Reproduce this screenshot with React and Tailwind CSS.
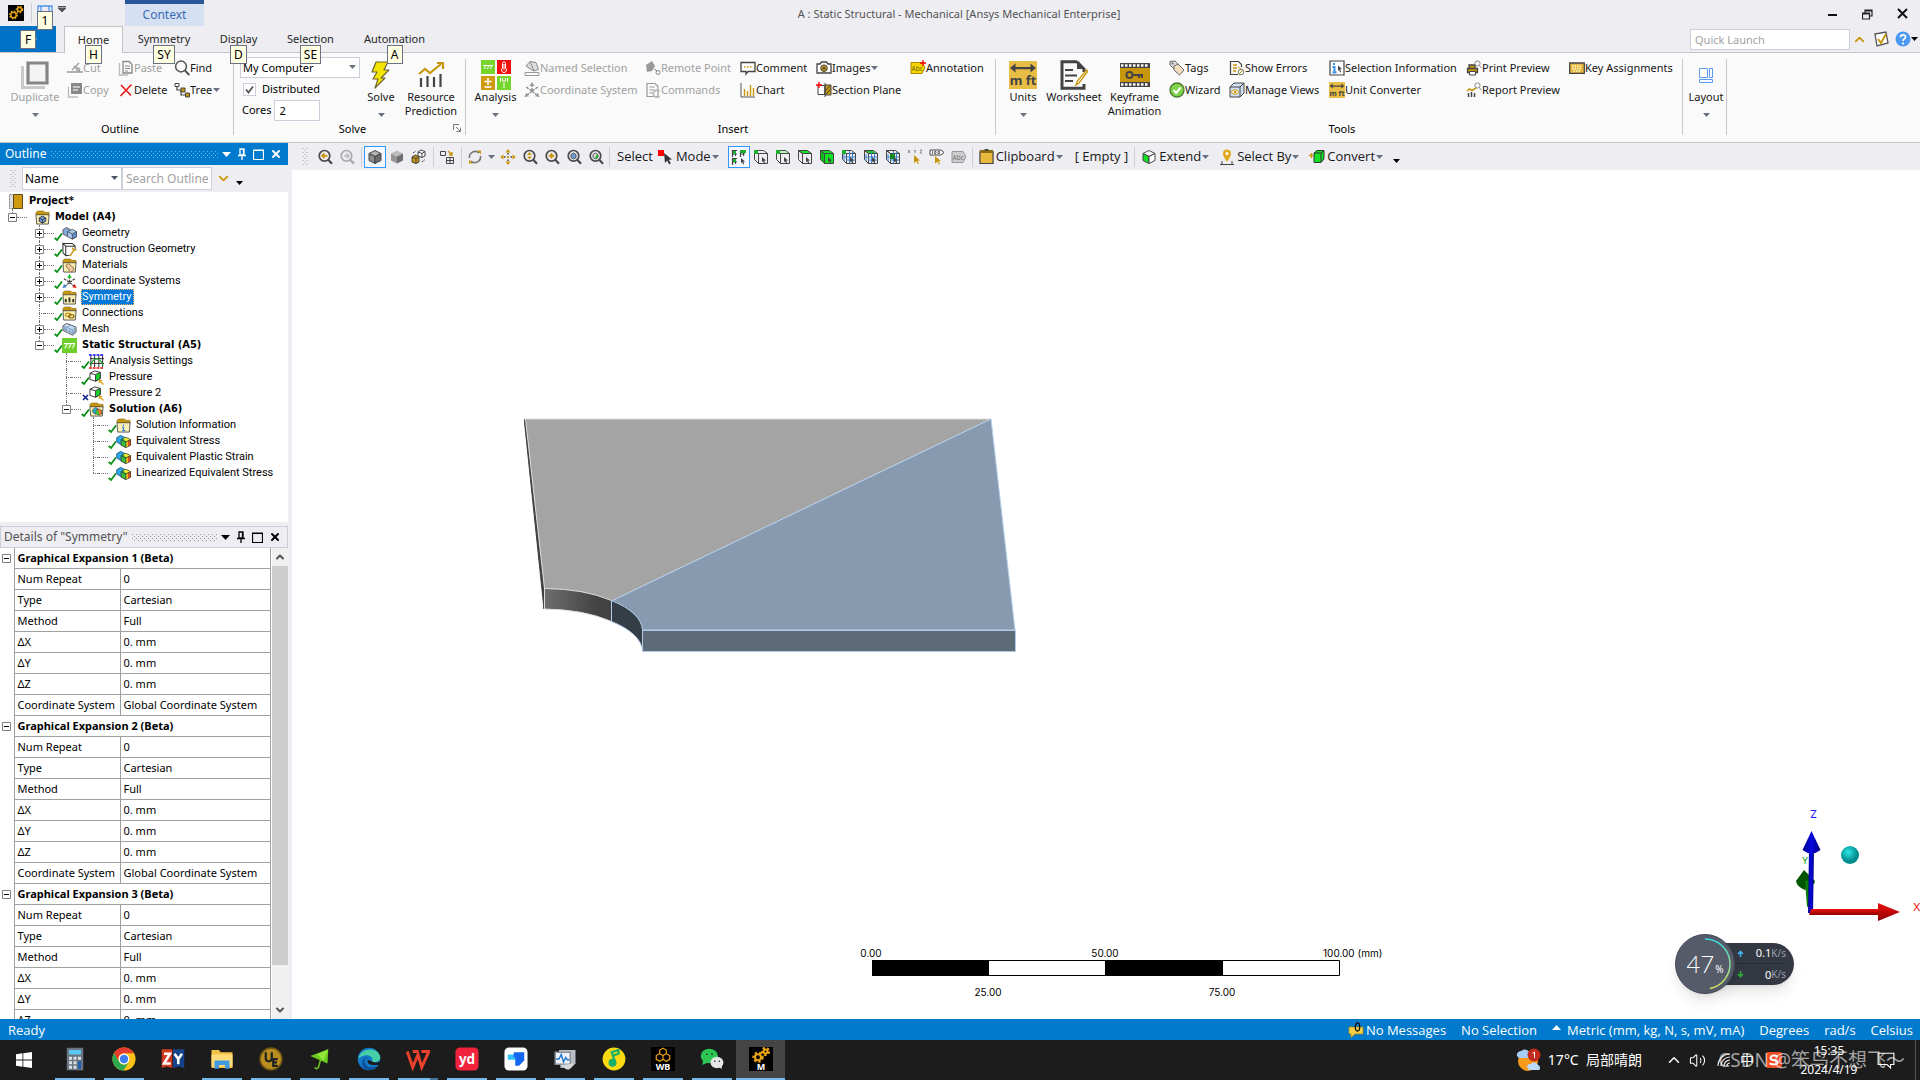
import { ChevronUp, ChevronDown, X, Volume2 } from 'lucide-react';

const GOLD = '#c8960c';
const DARK = '#444444';

const Svg = ({ w = 16, h = w, box = '0 0 16 16', children, className = '' }) => (
  <svg width={w} height={h} viewBox={box} fill="none" className={`shrink-0 ${className}`} aria-hidden="true">
    {children}
  </svg>
);

const Caret = ({ className = 'text-gray-500' }) => (
  <Svg w={7} h={4} box="0 0 7 4" className={className}>
    <path d="M0 0h7L3.5 4z" fill="currentColor" />
  </Svg>
);

const KeyTip = ({ children, className = '' }) => (
  <span className={`absolute z-10 h-[19px] min-w-4 border border-gray-500 bg-[#ffffe1] px-[3px] text-center text-xs leading-[17px] text-black ${className}`}>
    {children}
  </span>
);

/* ---------- icons ---------- */

const Gear = ({ cx, cy, r, color = '#e8a317' }) => (
  <>
    <circle cx={cx} cy={cy} r={r + 1} stroke={color} strokeWidth="1.6" strokeDasharray="1.5 1.4" />
    <circle cx={cx} cy={cy} r={r} stroke={color} strokeWidth="1.4" />
  </>
);

const AppIcon = ({ w = 16 }) => (
  <Svg w={w}>
    <path d="M0 0h16v16H0z" fill="#000" />
    <Gear cx={5.5} cy={10} r={2.7} />
    <Gear cx={11.5} cy={4.5} r={2} />
  </Svg>
);

const Cube = ({ top = '#fff', left = '#fff', right = '#fff', stroke = DARK, w = 16 }) => (
  <Svg w={w}>
    <path d="M8 1.5 14 4.5 8 7.5 2 4.5z" fill={top} stroke={stroke} strokeLinejoin="round" />
    <path d="M2 4.5 8 7.5v7L2 11.5z" fill={left} stroke={stroke} strokeLinejoin="round" />
    <path d="M14 4.5 8 7.5v7l6-3z" fill={right} stroke={stroke} strokeLinejoin="round" />
  </Svg>
);

const Magnifier = ({ stroke = '#4a4a4a', children }) => (
  <Svg>
    <circle cx="7.5" cy="6.8" r="5.3" stroke={stroke} strokeWidth="1.7" />
    <path d="m11 10.5 4 4.3" stroke={stroke} strokeWidth="2.2" />
    {children}
  </Svg>
);

const Arrow = ({ x = 9, y = 8 }) => (
  <path d={`M${x} ${y}l4 3.6-1.8.2 1 2.2-1 .4-1-2.1L${x} ${y + 5}z`} fill={DARK} />
);

const BoxPick = ({ top = 'none', front = 'none', side = 'none', grid, dot }) => (
  <Svg>
    <path d="M1.5 1.5h9l4 3h-9z" fill={top} stroke={DARK} />
    <path d="M1.5 1.5v9l4 4v-10z" fill={side} stroke={DARK} />
    <path d="M5.5 4.5h9v10h-9z" fill={front} stroke={DARK} />
    {grid && <path d="M8.5 2v12M11.5 3v11M3 8h11M3 5v7M5 11h9" stroke="#3b82d6" />}
    {dot && <path d="M1 1h4v4H1z" fill="#1fae2b" />}
    {grid === 'face' && <path d="M3 2h7l3 2H6z" fill="#16c626" />}
    {grid === 'body' && <path d="M5 5h5v5H5z" fill="#118a1c" />}
    <Arrow x={9} y={8} />
  </Svg>
);

const Doc = ({ color = DARK, children }) => (
  <Svg>
    <path d="M2 1.5h8l3 3v10H2z" stroke={color} strokeWidth="1.2" />
    <path d="M4.5 5h5M4.5 8h5M4.5 11h4" stroke={color} />
    {children}
  </Svg>
);

const Folder = ({ children }) => (
  <Svg>
    <path d="M1 5V2.5L3 1h6l1.5 1.5H15V6" fill={GOLD} stroke="#8a6a12" strokeWidth=".6" />
    <path d="M1 5h14l-.8 10H1.8z" fill="#fbefb4" stroke={DARK} strokeWidth=".9" />
    {children}
  </Svg>
);

const CubePair = ({ a, b, c }) => (
  <Svg>
    <path d="M1 4l4-2.5L9 4v5L5 11 1 8.500z" fill={a} stroke={DARK} strokeWidth=".8" />
    <path d="M6 6l5-2.500L15.500 6v5.500L11 14 6 11.500z" fill={b} stroke={DARK} strokeWidth=".8" />
    <path d="m11 8.500 4.500-2.500v5.500L11 14z" fill={c} stroke={DARK} strokeWidth=".8" />
    <path d="M6 6l5 2.500" stroke={DARK} strokeWidth=".8" />
  </Svg>
);

const StressCubes = () => (
  <Svg>
    <path d="M.8 4l4-2.500L9 3.500V9L5 11 .8 8.500z" fill="#2ba8e8" stroke="#1b4f7a" strokeWidth=".9" />
    <path d="M5 5.500 9 3.500V9l-4 2z" fill="#1fc8b0" />
    <path d="M5.500 6l5-2.500 5 2.500v6l-5 2.500-5-2.500z" fill="#35c53a" stroke="#333" strokeWidth=".9" />
    <path d="m8 5 2.500-1.200L15 6l-4.500 2z" fill="#f3e52a" />
    <path d="m10.500 8.500 2.500-1.300V13l-2.500 1.300z" fill="#f3c31c" />
    <path d="m13 7.300 2.200-1.100V12L13 13z" fill="#e0401c" />
    <path d="m5.500 6 5 2.500 5-2.500M10.500 8.500v6" stroke="#333" strokeWidth=".8" />
  </Svg>
);

const Axes = ({ gray }) => (
  <Svg>
    <path d="M8 9V2M8 9l6 5M8 9l-6 5M8 9 2 5M8 9l6-4" stroke={gray ? '#888' : '#444'} strokeWidth="1.3" strokeDasharray="3 1" />
    <path d="M8 0 5.500 4h5z" fill={gray ? '#999' : '#16c626'} />
    <path d="m15.500 15-4.500-.8 2.800-3.500z" fill={gray ? '#999' : '#e11'} />
    <path d="m.5 15 4.500-.8-2.800-3.500z" fill={gray ? '#999' : '#3b82d6'} />
  </Svg>
);

const MmFt = ({ w = 16 }) => (
  <Svg w={w} box="0 0 28 28">
    <path d="M0 0h28v28H0z" fill="#e8bd45" />
    <path d="M1 7 6.500 2.500v3.500h15V2.500L27 7l-5.500 4.500V8.200h-15v3.300z" fill={DARK} />
    <text x="14" y="24" textAnchor="middle" fontSize="13" fontWeight="700" fontFamily="Noto Sans, sans-serif" fill={DARK}>m ft</text>
  </Svg>
);

const Report = ({ w = 16, h = w }) => (
  <Svg w={w} h={h} box="0 0 28 26">
    <path d="M4 25V16M10.500 25V14M17 25V15M23.500 25V12" stroke={DARK} strokeWidth="2.200" />
    <path d="m2 12 6-5 5 4 11-9" stroke={GOLD} strokeWidth="2.200" />
    <path d="M20 1h6v6" stroke={GOLD} strokeWidth="2.200" />
  </Svg>
);

const icons = {
  duplicate: (
    <Svg w={28} box="0 0 28 28">
      <path d="M1.500 5v21.500H24" stroke="#c9c9c9" strokeWidth="3" />
      <path d="M7 2h19v20H7z" fill="#f4f4f4" stroke="#858585" strokeWidth="3.200" />
    </Svg>
  ),
  cut: (
    <Svg>
      <path d="M0 12h16M5 10 12 3M7 6l6 5" stroke="#999" strokeWidth="1.300" />
      <circle cx="11" cy="9.500" r="1.800" stroke="#999" />
    </Svg>
  ),
  copy: (
    <Svg>
      <path d="M1.500 5v10H11" stroke="#bbb" strokeWidth="1.300" />
      <path d="M4 1h11v11H4z" fill="#888" />
      <path d="M6 5h7M6 8h5" stroke="#fff" strokeWidth="1.200" />
    </Svg>
  ),
  paste: (
    <Svg>
      <path d="M1.500 3v12H10" stroke="#bbb" strokeWidth="1.300" />
      <path d="M5 1.500h6l3 3V13H5z" stroke="#888" strokeWidth="1.300" />
      <path d="M7 6h5M7 8.500h5M7 11h3" stroke="#888" />
    </Svg>
  ),
  find: (
    <Svg>
      <circle cx="7" cy="6.500" r="5.400" stroke="#555" strokeWidth="1.500" />
      <path d="m11 10.500 4.300 4.500" stroke="#555" strokeWidth="2" />
    </Svg>
  ),
  del: <Svg><path d="m3 3 10 10.500M13.500 2.500 2.500 14" stroke="#ee1c1c" strokeWidth="1.700" /></Svg>,
  tree: (
    <Svg>
      <path d="M3 4v4h5M7 8v5h5" stroke="#444" strokeWidth="1.200" />
      <path d="M1 1.500h4v3H1z" fill="#fff" stroke="#444" />
      <path d="M7 6h4v4H7zM11.500 11h4v4h-4z" fill={GOLD} stroke="#444" />
    </Svg>
  ),
  solve: (
    <Svg w={20} h={28} box="0 0 20 28">
      <path d="M5 1h12l-4 8h5L10 17h4L4 27l3-9H2l4-7H1z" fill="#f5e400" stroke="#6b6436" strokeWidth="1.200" strokeLinejoin="round" />
    </Svg>
  ),
  resource: <Report w={28} h={26} />,
  analysis: (
    <Svg w={30} h={30} box="0 0 30 30">
      <path d="M0 0h14v14H0zM16 16h14v14H16z" fill="#77d42a" />
      <path d="M16 0h14v14H16z" fill="#f40d0d" />
      <path d="M0 16h14v14H0z" fill="#cf9a0e" />
      <path d="M2 5.500h10M3 9l2-3M6 9l2-3M9 9l2-3" stroke="#fff" />
      <path d="M21.500 3.500a1.500 1.500 0 0 1 3 0V8a2.500 2.500 0 1 1-3 0zM23 4v6" stroke="#fff" />
      <path d="M7 18v7M3.500 21.500h7M3.500 27h7" stroke="#fff" strokeWidth="1.500" />
      <path d="M19.500 18v4M21.500 18v3M24.500 18v3M26.500 18v4M23 20v8" stroke="#fff" />
    </Svg>
  ),
  named: (
    <Svg>
      <path d="M1 12.500h14v3H1z" stroke="#999" />
      <path d="m2 6 4-4.500 6 1 2.500 7-5 1.500z" fill="#ddd" stroke="#888" />
      <path d="m6 1.500 4 9.500" stroke="#888" />
    </Svg>
  ),
  coord: <Axes gray />,
  remote: (
    <Svg>
      <path d="m1 5 6-4 3 5-3 5-5 1z" fill="#999" />
      <path d="m9 9 3 2" stroke="#888" />
      <circle cx="13" cy="12.500" r="2" stroke="#888" />
    </Svg>
  ),
  commands: (
    <Doc color="#999">
      <path d="M14.500 9.500A3.500 3.500 0 1 0 14.500 14" stroke="#bbb" strokeWidth="1.800" />
    </Doc>
  ),
  comment: (
    <Svg>
      <path d="M1 2.500h14v9H8L6 14v-2.500H1z" fill="#fff" stroke={DARK} strokeWidth="1.300" />
      <path d="M4 7h8" stroke={GOLD} strokeWidth="1.300" strokeDasharray="1.500 1.500" />
    </Svg>
  ),
  chart: (
    <Svg>
      <path d="M1 1v14h14" stroke="#555" />
      <path d="M4.500 14V7M7.500 14V9M10.500 14V3M13.500 14V6" stroke={GOLD} strokeWidth="1.400" />
    </Svg>
  ),
  images: (
    <Svg>
      <path d="M1 4h3l1.500-2h5L12 4h3v9H1z" fill="#fff" stroke={DARK} strokeWidth="1.300" />
      <circle cx="8" cy="8.200" r="3.300" fill={GOLD} stroke={DARK} />
      <circle cx="8" cy="8.200" r="1.200" fill={DARK} />
    </Svg>
  ),
  section: (
    <Svg>
      <path d="M2 3.500h7v9H2z" fill="#fff" stroke={DARK} />
      <path d="M9 3h6v10H9z" fill={GOLD} stroke={DARK} />
      <path d="m9 9 5-5M10 12l5-5M9 1v14" stroke={DARK} />
      <path d="M3 0v6M0 3h6" stroke="#f00" strokeWidth="1.300" />
    </Svg>
  ),
  annotation: (
    <Svg>
      <path d="M1 2.500h11l3 5-3 6H1z" fill="#f2d500" stroke="#a88a00" />
      <text x="1.500" y="10.500" fontSize="6.500" fontFamily="Noto Sans, sans-serif" fill="#7a6600">Abc</text>
      <path d="M13 0v6M10 3h6" stroke="#f00" strokeWidth="1.300" />
    </Svg>
  ),
  units: <MmFt w={28} />,
  unitConverter: <MmFt />,
  worksheet: (
    <Svg w={28} h={30} box="0 0 28 30">
      <path d="M17 1.700H2v26.600h22V24M17 1.700 24 9v3" stroke={DARK} strokeWidth="3" />
      <path d="M17 1v8h7.500z" fill={DARK} />
      <path d="M5 10h8M5 15.500h12M5 21h8" stroke={DARK} strokeWidth="2" />
      <path d="m16 25 1.500-4L26.500 10l1.200 1.200L19 23z" fill="#fff" stroke={GOLD} strokeWidth="1.300" />
    </Svg>
  ),
  keyframe: (
    <Svg w={30} h={24} box="0 0 30 24">
      <path d="M0 0h30v24H0z" fill={DARK} />
      <path d="M1 2.500h28M1 21.500h28" stroke="#fff" strokeWidth="2.500" strokeDasharray="2.500 1.500" />
      <path d="M0 5h30v14H0z" fill={GOLD} />
      <circle cx="9.500" cy="12" r="3" stroke={DARK} strokeWidth="2" />
      <path d="M12.500 12H23M19 12v3M22 12v3" stroke={DARK} strokeWidth="2" />
    </Svg>
  ),
  tags: (
    <Svg>
      <path d="m1 1.500 5-.5 4 4-4 5-5-5z" fill="#ddd" stroke="#666" />
      <path d="m5 6 4-2 6 6-4.500 5L5 10z" fill="#f6dfc0" stroke="#666" />
      <circle cx="3.500" cy="3.500" r="1" fill="#666" />
    </Svg>
  ),
  wizard: (
    <Svg>
      <circle cx="8" cy="8" r="7" fill="#7ed348" stroke="#4c7a35" strokeWidth="1.300" />
      <path d="m4.500 8 2.700 3 4.500-5.500" stroke="#fff" strokeWidth="2" />
    </Svg>
  ),
  errors: (
    <Svg>
      <path d="M9 14.500H1.500v-13h8l3 3V7" stroke={DARK} strokeWidth="1.200" />
      <path d="M4 5h4M4 8h4M4 11h3" stroke={GOLD} strokeWidth="1.300" />
      <circle cx="12" cy="12" r="2.800" stroke="#777" />
      <path d="m10 14 4-4M9 7l3 2" stroke={GOLD} />
    </Svg>
  ),
  views: (
    <Svg>
      <path d="M1 5h10v10H1zM1 5l4-4h10v10l-4 4M11 5l4-4" fill="#cfe0f5" stroke={DARK} />
      <ellipse cx="6" cy="10" rx="3.500" ry="2.200" fill="#fff" stroke={GOLD} />
      <circle cx="6" cy="10" r="1.300" fill={GOLD} />
    </Svg>
  ),
  selInfo: (
    <Svg>
      <path d="M1 1h14v14H1z" fill="#fff" stroke={DARK} strokeWidth="1.200" />
      <path d="M5 3v2M3.500 7H5.500v5M3.500 12.500h4" stroke="#3b8fe8" strokeWidth="2" />
      <path d="M9 5.500 13 9l-2 .3 1.200 2.700-1 .5L10 9.800 9 11z" fill={DARK} />
    </Svg>
  ),
  print: (
    <Svg>
      <path d="M3 9V5h6v4M1.500 8.500h10v4h-10z" fill={GOLD} stroke={DARK} strokeWidth="1.300" />
      <path d="M3.500 11.500h6v3.500h-6z" fill="#fff" stroke={DARK} />
      <circle cx="11.500" cy="3.500" r="2.600" stroke="#888" />
      <path d="m13.300 5.500 2.200 2.500" stroke="#888" />
    </Svg>
  ),
  reportPreview: (
    <Svg>
      <path d="M2.500 15v-4M5.500 15v-5M8.500 15v-4" stroke={DARK} strokeWidth="1.500" />
      <path d="m1 9 2.500-2L6 8.500 10 6" stroke={GOLD} strokeWidth="1.500" />
      <circle cx="11.500" cy="3.500" r="2.600" stroke="#888" />
      <path d="m13.300 5.500 2.200 2.500" stroke="#888" />
    </Svg>
  ),
  keys: (
    <Svg>
      <path d="M.7 3h14.600v10.300H.7z" fill="#e8b93c" stroke={DARK} strokeWidth="1.300" />
      <path d="M3 6h10M3 8.500h10M4.500 11h7" stroke="#fff7d8" strokeWidth="1.300" strokeDasharray="1.500 1" />
    </Svg>
  ),
  layout: (
    <Svg>
      <path d="M1.500 1.500h8v9h-8zM11.500 1.500h3v9h-3zM1.500 12.500h13v3h-13z" fill="#fff" stroke="#5b9bf0" />
    </Svg>
  ),
};

/* ---------- ribbon ---------- */

const SmallButton = ({ icon, label, disabled, menu }) => (
  <button disabled={disabled} className="flex h-[22px] items-center whitespace-nowrap text-[11px] text-neutral-900 disabled:text-neutral-400">
    {icons[icon]}
    <span>{label}</span>
    {menu && <Caret className="ml-px text-gray-500" />}
  </button>
);

const BigButton = ({ icon, lines, disabled, menu, className = '' }) => (
  <button disabled={disabled} className={`flex shrink-0 flex-col items-center pt-[7px] text-[11px] leading-[14px] text-neutral-900 disabled:text-neutral-400 ${className}`}>
    <span className="flex h-[30px] items-center">{icons[icon]}</span>
    {lines.map((l) => <span key={l} className="whitespace-nowrap">{l}</span>)}
    {menu && <span className="flex h-[22px] items-center"><Caret /></span>}
  </button>
);

const Group = ({ label, children, className = '' }) => (
  <>
    <section aria-label={label || 'Layout'} className={`flex shrink-0 flex-col ${className}`}>
      <div className="flex h-[68px] items-start">{children}</div>
      <div className="text-center text-[11px] leading-4">{label}</div>
    </section>
    <div className="mt-1.5 h-[76px] w-px shrink-0 bg-[#c8c8ce]" />
  </>
);

const Column = ({ children, className = '' }) => <div className={`shrink-0 pt-1 ${className}`}>{children}</div>;

const Ribbon = () => (
  <div className="flex h-[90px] shrink-0 overflow-hidden border-b border-[#c3c3c9] bg-[#fafafa]">
    <Group label="Outline" className="w-[233px] pl-[7px]">
      <BigButton icon="duplicate" lines={['Duplicate']} disabled menu className="w-[56px]" />
      <Column className="ml-1 w-[51px]">
        <SmallButton icon="cut" label="Cut" disabled />
        <SmallButton icon="copy" label="Copy" disabled />
      </Column>
      <Column className="w-[56px]">
        <SmallButton icon="paste" label="Paste" disabled />
        <SmallButton icon="del" label="Delete" />
      </Column>
      <Column>
        <SmallButton icon="find" label="Find" />
        <SmallButton icon="tree" label="Tree" menu />
      </Column>
    </Group>
    <Group label="Solve" className="relative w-[231px] pl-[6px]">
      <div className="w-[120px] pt-1 text-[11px]">
        <div className="relative">
          <select aria-label="Solve target" className="block h-[21px] w-full appearance-none border border-[#cccedb] bg-white pl-0.5 leading-4">
            <option>My Computer</option>
          </select>
          <Caret className="pointer-events-none absolute top-2 right-1 text-gray-500" />
        </div>
        <label className="flex h-[22px] items-center gap-1.5 pl-[3px]">
          <span className="relative flex">
            <input type="checkbox" defaultChecked className="size-[13px] appearance-none border border-[#cccedb] bg-white" />
            <Svg w={9} box="0 0 9 9" className="pointer-events-none absolute top-0.5 left-0.5">
              <path d="m1 4.500 2.500 3L8 1.500" stroke="#555" strokeWidth="1.800" />
            </Svg>
          </span>
          Distributed
        </label>
        <label className="flex h-[21px] items-center gap-[3px] pl-0.5">
          Cores
          <input defaultValue="2" className="h-[21px] w-[46px] border border-[#cccedb] bg-white px-1" />
        </label>
      </div>
      <BigButton icon="solve" lines={['Solve']} menu className="ml-[3px] w-[36px]" />
      <BigButton icon="resource" lines={['Resource', 'Prediction']} className="ml-[3px] w-[58px]" />
      <Svg w={8} box="0 0 8 8" className="absolute right-1 bottom-2.5">
        <path d="M.5 6V.5H6M3 3l4 4M7.500 3.500v4h-4" stroke="#777" />
      </Svg>
    </Group>
    <Group label="Insert" className="w-[529px] pl-[5px]">
      <BigButton icon="analysis" lines={['Analysis']} menu className="w-[49px]" />
      <Column className="ml-1 w-[121px]">
        <SmallButton icon="named" label="Named Selection" disabled />
        <SmallButton icon="coord" label="Coordinate System" disabled />
      </Column>
      <Column className="w-[95px]">
        <SmallButton icon="remote" label="Remote Point" disabled />
        <SmallButton icon="commands" label="Commands" disabled />
      </Column>
      <Column className="w-[76px]">
        <SmallButton icon="comment" label="Comment" />
        <SmallButton icon="chart" label="Chart" />
      </Column>
      <Column className="w-[94px]">
        <SmallButton icon="images" label="Images" menu />
        <SmallButton icon="section" label="Section Plane" />
      </Column>
      <Column>
        <SmallButton icon="annotation" label="Annotation" />
      </Column>
    </Group>
    <Group label="Tools" className="w-[686px] pl-[6px]">
      <BigButton icon="units" lines={['Units']} menu className="w-[42px]" />
      <BigButton icon="worksheet" lines={['Worksheet']} className="ml-px w-[58px]" />
      <BigButton icon="keyframe" lines={['Keyframe', 'Animation']} className="ml-[3px] w-[57px]" />
      <Column className="ml-[6px] w-[60px]">
        <SmallButton icon="tags" label="Tags" />
        <SmallButton icon="wizard" label="Wizard" />
      </Column>
      <Column className="w-[100px]">
        <SmallButton icon="errors" label="Show Errors" />
        <SmallButton icon="views" label="Manage Views" />
      </Column>
      <Column className="w-[137px]">
        <SmallButton icon="selInfo" label="Selection Information" />
        <SmallButton icon="unitConverter" label="Unit Converter" />
      </Column>
      <Column className="w-[103px]">
        <SmallButton icon="print" label="Print Preview" />
        <SmallButton icon="reportPreview" label="Report Preview" />
      </Column>
      <Column>
        <SmallButton icon="keys" label="Key Assignments" />
      </Column>
    </Group>
    <Group className="w-[43px] pl-1">
      <BigButton icon="layout" lines={['Layout']} menu className="w-[38px]" />
    </Group>
  </div>
);

/* ---------- title bar and tabs ---------- */

const TitleBar = () => (
  <header className="relative flex h-[26px] shrink-0 items-start bg-[#eeeef2]">
    <div className="flex items-center pt-[3px] pl-2">
      <AppIcon />
      <span className="ml-[7px] h-[20px] w-px bg-[#cccedb]" />
      <button aria-label="Save" className="relative ml-[5px]">
        <Svg>
          <path d="M1 1h14v14H1zM4 1v6h8V1M4 15v-4h8v4" stroke="#4f93ea" strokeWidth="1.300" />
        </Svg>
        <KeyTip className="top-1.5 left-0">1</KeyTip>
      </button>
      <Svg w={8} h={6} box="0 0 8 6" className="-mt-2 ml-[5px]">
        <path d="M0 .5h8M0 2h8L4 6z" fill="#555" stroke="#555" />
      </Svg>
    </div>
    <div className="absolute left-[125px] h-[26px] w-[79px] border-t-4 border-[#2b579a] bg-[#d5e0f2] text-center text-xs leading-[22px] text-[#3a6db5]">Context</div>
    <h1 className="flex-1 self-center pr-[68px] pt-[2px] text-center text-[11px] text-neutral-600">
      A : Static Structural - Mechanical [Ansys Mechanical Enterprise]
    </h1>
    <div className="absolute right-0 flex items-center gap-[24px] pt-[7px] pr-[12px]">
      <button aria-label="Minimize"><Svg w={10} h={14} box="0 0 10 14"><path d="M0 8h9" stroke="#111" strokeWidth="2" /></Svg></button>
      <button aria-label="Restore"><Svg w={11} h={14} box="0 0 11 14"><path d="M3 6V3h7v6H7M.5 6h7v6h-7zM.5 7h7M3 4h7" stroke="#222" strokeWidth="1.200" /></Svg></button>
      <button aria-label="Close"><Svg w={11} h={14} box="0 0 11 14"><path d="m1 2 9 9M10 2l-9 9" stroke="#111" strokeWidth="2" /></Svg></button>
    </div>
  </header>
);

const tabs = [
  { name: 'Symmetry', tip: 'SY', width: 'w-[82px]' },
  { name: 'Display', tip: 'D', width: 'w-[67px]' },
  { name: 'Selection', tip: 'SE', width: 'w-[77px]' },
  { name: 'Automation', tip: 'A', width: 'w-[91px]' },
];

const Tabs = () => (
  <nav className="flex h-[27px] shrink-0 border-b border-[#c3c3c9] bg-[#eeeef2] text-[11px] text-neutral-800">
    <button className="relative w-[56px] bg-[#0072c6] text-white">
      File
      <KeyTip className="top-1 left-5">F</KeyTip>
    </button>
    <button className="relative -mb-px ml-2 w-[59px] border border-b-0 border-[#c3c3c9] bg-[#fafafa]">
      Home
      <KeyTip className="top-[18px] left-[20px]">H</KeyTip>
    </button>
    {tabs.map((t) => (
      <button key={t.name} className={`relative pt-px ${t.width}`}>
        {t.name}
        <span className="absolute top-[19px] left-0 flex w-full justify-center">
          <KeyTip>{t.tip}</KeyTip>
        </span>
      </button>
    ))}
    <div className="ml-auto flex items-center gap-1.5 pr-0.5">
      <input placeholder="Quick Launch" aria-label="Quick Launch" className="-mr-1 h-[21px] w-[160px] border border-[#cccedb] bg-white px-1 placeholder:text-neutral-400" />
      <ChevronUp size={15} strokeWidth={3} color={GOLD} />
      <Svg>
        <path d="m2 3 11-2 2 11-11 3z" fill="#fff" stroke="#555" strokeWidth="1.300" />
        <path d="m5 8 3 4 5-9" stroke={GOLD} strokeWidth="2" />
      </Svg>
      <button aria-label="Help" className="flex items-center">
        <Svg>
          <circle cx="8" cy="8" r="7.500" fill="#4a98ef" />
          <path d="M5.500 6.200C5.500 3 10.700 3 10.500 6.200 10.300 8 8 7.800 8 10M8 11.500v2" stroke="#fff" strokeWidth="1.800" />
        </Svg>
        <Caret className="text-black" />
      </button>
    </div>
  </nav>
);

/* ---------- outline ---------- */

const DockHeader = ({ title, active }) => (
  <div className={`flex h-[22px] shrink-0 items-center pr-1.5 text-xs ${active ? 'bg-[#007acc] pl-[5px] text-white' : 'border border-[#cccedb] bg-[#eeeef2] pl-[3px] text-neutral-600'}`}>
    <span className="whitespace-nowrap">{title}</span>
    <svg className="mx-1 h-[7px] min-w-0 flex-1" aria-hidden="true">
      <defs>
        <pattern id={active ? 'gripActive' : 'grip'} width="4" height="4" patternUnits="userSpaceOnUse">
          <path d="M0 0h1v1H0zM2 2h1v1H2z" fill={active ? '#66b3e6' : '#9a9aa2'} />
        </pattern>
      </defs>
      <rect width="100%" height="100%" fill={active ? 'url(#gripActive)' : 'url(#grip)'} />
    </svg>
    <div className={`flex items-center gap-1.5 ${active ? 'text-white' : 'text-black'}`}>
      <button aria-label="Panel menu"><Svg w={9} h={5} box="0 0 9 5"><path d="M0 0h9L4.500 5z" fill="currentColor" /></Svg></button>
      <button aria-label="Pin">
        <Svg w={10} h={12} box="0 0 10 12"><path d="M3 1h4v6H3zM6.500 1v6M1 7.500h8M5 8v4" stroke="currentColor" strokeWidth="1.300" /></Svg>
      </button>
      <button aria-label="Maximize">
        <Svg w={11} h={11} box="0 0 11 11"><path d="M.5 1h10v9.500H.5zM.5 1.500h10" stroke="currentColor" strokeWidth="1.200" /></Svg>
      </button>
      <button aria-label="Close panel"><X size={12} strokeWidth={4} /></button>
    </div>
  </div>
);

const Grip = () => (
  <Svg w={6} h={17} box="0 0 6 17">
    <path d="M1 0v17M5 0v17" stroke="#a0a0a8" strokeWidth="1" strokeDasharray="1 3" />
    <path d="M3 2v15" stroke="#a0a0a8" strokeWidth="1" strokeDasharray="1 3" />
  </Svg>
);

const treeIcons = {
  model: <Folder><path d="m4.500 8.500 3.500-2 3.500 2v3.500l-3.500 2-3.500-2z" fill="#6ea3e0" stroke="#333" /><path d="m4.500 8.500 3.500 2 3.500-2M8 10.500V14" stroke="#333" /></Folder>,
  geometry: <CubePair a="#7fa9dc" b="#a9c8ee" c="#5f90cc" />,
  construction: (
    <Svg>
      <path d="M1 1.500h10l3 3M1 1.500v10l3 3V4.500zM4 4.500h10v3M4 14.500h4" stroke="#333" fill="#fff" strokeWidth="1.100" />
      <path d="m8.500 15 4-6M11 6l1.500 3 3-1" stroke={GOLD} strokeWidth="1.600" />
    </Svg>
  ),
  materials: <Folder><path d="m4 8 3-2 6 5-2 3.500-2 .5z" fill="#efc9a0" stroke="#8c6a4a" /></Folder>,
  coords: <Axes />,
  symmetry: <Folder><path d="M4 13V9.500M8 13V8M12 13V9.500" stroke="#333" strokeWidth="2" /></Folder>,
  connections: <Folder><ellipse cx="6.500" cy="9.500" rx="2.800" ry="1.800" stroke={GOLD} strokeWidth="1.300" /><ellipse cx="10" cy="11" rx="2.800" ry="1.800" stroke="#8a6a12" strokeWidth="1.300" /></Folder>,
  mesh: (
    <Svg>
      <path d="M1 4l4-2.500L9 3l6 2.500V11l-4 3-5-2.500L1 9z" fill="#c5daf3" stroke="#555" />
      <path d="M1 4l4 2 4-3M5 6v5M6 6l5 2.500 4-3M11 8.500V14M3 5v5M1 6.500 5 8.500l6 3 4-3M8.500 7v5.500M13 7v5.500" stroke="#6a87ab" strokeWidth=".7" />
    </Svg>
  ),
  structural: (
    <Svg>
      <path d="M0 0h16v16H0z" fill="#6fcf2a" />
      <path d="M2 6h12M3 11l2.500-4M7 11l2.500-4M11 11l2.500-4" stroke="#fff" strokeWidth="1.200" />
    </Svg>
  ),
  settings: (
    <Svg>
      <path d="M2 1v13M6 1v13M10.500 1v13M14.500 1v13M1 5h15M1 10h15" stroke="#222" />
      <path d="M1.500 12C5 3 11 3 15 12" stroke="#19a52b" strokeWidth="1.200" />
      <path d="M0 1h15" stroke="#11f" strokeWidth="1.500" strokeDasharray="3 1" />
      <path d="M0 15h16" stroke="#e11" strokeWidth="1.500" strokeDasharray="3 1" />
    </Svg>
  ),
  pressure: (
    <Svg>
      <path d="m1 3.500 5-2.500 6 1.500v6.500l-5 3-6-2z" fill="#fff" stroke="#333" />
      <path d="m7 5 5-2.500V9l-5 3z" fill="#16d62c" stroke="#333" />
      <path d="M1 3.500 7 5" stroke="#333" />
      <path d="m15.500 15.500-4-4M11 14v-3h3" stroke="#d9a520" strokeWidth="1.400" />
    </Svg>
  ),
  solution: <Folder><path d="m4 8 3-2 3 1.500v4L7 13l-3-2z" fill="#28b8d0" stroke="#333" strokeWidth=".7" /><path d="m7.500 9 3-1.500 3 1.500v3.500l-3 1.500-3-1.500z" fill="#f0801c" stroke="#333" strokeWidth=".7" /><path d="m7.500 9 3 1.500V14l-3-1.500z" fill="#35c53a" /></Folder>,
  info: <Folder><path d="M8 7v1.500M6.500 10H8v3.500M6.500 13.500h3.500" stroke="#3b82d6" strokeWidth="1.300" /></Folder>,
  stress: <StressCubes />,
};

const tree = [
  { level: 0, label: 'Model (A4)', icon: 'model', box: '-', bold: true, last: true },
  { level: 1, label: 'Geometry', icon: 'geometry', box: '+', mark: 'ok' },
  { level: 1, label: 'Construction Geometry', icon: 'construction', box: '+', mark: 'ok' },
  { level: 1, label: 'Materials', icon: 'materials', box: '+', mark: 'ok' },
  { level: 1, label: 'Coordinate Systems', icon: 'coords', box: '+', mark: 'ok' },
  { level: 1, label: 'Symmetry', icon: 'symmetry', box: '+', mark: 'ok', selected: true },
  { level: 1, label: 'Connections', icon: 'connections', mark: 'ok' },
  { level: 1, label: 'Mesh', icon: 'mesh', box: '+', mark: 'ok' },
  { level: 1, label: 'Static Structural (A5)', icon: 'structural', box: '-', mark: 'ok', bold: true, last: true },
  { level: 2, label: 'Analysis Settings', icon: 'settings', mark: 'ok' },
  { level: 2, label: 'Pressure', icon: 'pressure', mark: 'ok' },
  { level: 2, label: 'Pressure 2', icon: 'pressure', mark: 'off' },
  { level: 2, label: 'Solution (A6)', icon: 'solution', box: '-', mark: 'ok', bold: true, last: true },
  { level: 3, label: 'Solution Information', icon: 'info', mark: 'ok' },
  { level: 3, label: 'Equivalent Stress', icon: 'stress', mark: 'ok' },
  { level: 3, label: 'Equivalent Plastic Strain', icon: 'stress', mark: 'ok' },
  { level: 3, label: 'Linearized Equivalent Stress', icon: 'stress', mark: 'ok', last: true },
];

const indents = ['pl-2', 'pl-[35px]', 'pl-[62px]', 'pl-[89px]'];

const Expander = ({ kind }) => (
  <Svg w={9} box="0 0 9 9" className="relative">
    <path d="M.5.500h8v8h-8z" fill="#fff" stroke="#808080" />
    <path d={kind === '+' ? 'M2 4.500h5M4.500 2v5' : 'M2 4.500h5'} stroke="#000" />
  </Svg>
);

const TreeRow = ({ row }) => (
  <li className={`flex h-4 items-center ${indents[row.level]}`}>
    <span className="relative flex h-4 w-[9px] items-center">
      <span className={`absolute top-0 left-1 border-l border-dotted border-neutral-500 ${row.last ? 'h-2' : 'h-4'}`} />
      {row.box ? <Expander kind={row.box} /> : <span className="ml-1 flex-1 border-t border-dotted border-neutral-500" />}
    </span>
    <span className="w-[10px] border-t border-dotted border-neutral-500" />
    <span className="flex h-4 w-2 items-end">
      {row.mark === 'ok' && <Svg w={9} h={8} box="0 0 9 8"><path d="M.7 5 3 7 8 .5" stroke="#0f9018" strokeWidth="1.800" /></Svg>}
      {row.mark === 'off' && <Svg w={8} h={8} box="0 0 8 8"><path d="m2 2 5 5M7 2 2 7" stroke="#0b1f8c" strokeWidth="1.500" /></Svg>}
    </span>
    <span className="flex w-[15px] justify-center [&>svg]:size-[15px]">{treeIcons[row.icon]}</span>
    <button
      className={`ml-1 h-4 px-px text-[11px] leading-4 whitespace-nowrap ${row.bold ? 'font-["DejaVu_Sans_Condensed",sans-serif] font-bold' : 'font-[Roboto,sans-serif]'} ${row.selected ? 'bg-[#0078d7] pr-0.5 text-white outline-1 -outline-offset-1 outline-orange-300 outline-dotted' : 'text-black'}`}
    >
      {row.label}
    </button>
  </li>
);

const Outline = () => (
  <section className="flex h-[379px] shrink-0 flex-col bg-white">
    <DockHeader title="Outline" active />
    <div className="flex h-[27px] shrink-0 items-center bg-[#eeeef2] pl-[10px]">
      <Grip />
      <div className="relative ml-1.5">
        <select aria-label="Filter by" className="block h-[23px] w-[100px] appearance-none border border-[#cccedb] bg-white pl-0.5 text-xs">
          <option>Name</option>
        </select>
        <Caret className="pointer-events-none absolute top-[9px] right-1 text-gray-600" />
      </div>
      <input placeholder="Search Outline" aria-label="Search Outline" className="h-[23px] w-[90px] border border-[#cccedb] bg-white pl-[3px] text-xs placeholder:text-neutral-400" />
      <button aria-label="Search options" className="ml-1"><ChevronDown size={15} strokeWidth={3} color={GOLD} /></button>
      <Caret className="mt-2 ml-[5px] text-black" />
    </div>
    <ul className="flex flex-col pt-px text-black">
      <li className="flex h-4 items-center pl-[9px]">
        <Svg w={14} h={15} box="0 0 14 15">
          <path d="M.5.500h4v14h-4z" fill="#ddd" stroke="#777" strokeDasharray="2 1" />
          <path d="M4.500.500h9v14h-9z" fill="#cf9a0e" stroke="#5a4a1a" />
        </Svg>
        <button className='ml-[6px] font-["DejaVu_Sans_Condensed",sans-serif] text-[11px] leading-4 font-bold'>Project*</button>
      </li>
      {tree.map((row) => <TreeRow key={row.label} row={row} />)}
    </ul>
  </section>
);

/* ---------- details ---------- */

const details = [
  ['Num Repeat', '0'],
  ['Type', 'Cartesian'],
  ['Method', 'Full'],
  ['ΔX', '0. mm'],
  ['ΔY', '0. mm'],
  ['ΔZ', '0. mm'],
  ['Coordinate System', 'Global Coordinate System'],
];

const Details = () => (
  <section className="flex min-h-0 flex-1 flex-col bg-[#eeeef2] pt-1">
    <DockHeader title={'Details of "Symmetry"'} />
    <div className="flex min-h-0 flex-1 bg-white">
      <div className="min-w-0 flex-1 overflow-hidden">
        <table className="-mt-px w-full table-fixed border-collapse text-[11px] leading-4 text-black">
          <colgroup>
            <col className="w-[14px]" />
            <col className="w-[106px]" />
            <col />
          </colgroup>
          {[1, 2, 3].map((n) => (
            <tbody key={n}>
              <tr className="h-[21px]">
                <td className="p-0 pl-0.5"><Expander kind="-" /></td>
                <th colSpan={2} className="border border-[#a0a0a0] p-0 pl-[3px] text-left font-bold">Graphical Expansion {n} (Beta)</th>
              </tr>
              {details.map(([name, value]) => (
                <tr key={name} className="h-[21px]">
                  <td className="p-0" />
                  <td className="border border-[#a0a0a0] p-0 pl-[3px] whitespace-nowrap">{name}</td>
                  <td className="border border-[#a0a0a0] p-0 pl-[3px] whitespace-nowrap">{value}</td>
                </tr>
              ))}
            </tbody>
          ))}
        </table>
      </div>
      <div className="ml-px flex w-[16px] shrink-0 flex-col items-center bg-[#f0f0f0] text-neutral-600">
        <ChevronUp size={12} strokeWidth={4} className="my-[3px] shrink-0" />
        <div className="w-full flex-[400] bg-[#cdcdcd]" />
        <div className="flex-[36]" />
        <ChevronDown size={12} strokeWidth={4} className="my-[3px] shrink-0" />
      </div>
    </div>
  </section>
);

/* ---------- graphics view ---------- */

const Tool = ({ label, on, children }) => (
  <button aria-label={label} className={`flex size-[22px] shrink-0 items-center justify-center ${on ? 'border border-[#3399ff] bg-[#f5f9ff]' : ''}`}>
    {children}
  </button>
);

const Sep = ({ className = '' }) => <span className={`h-[20px] w-px shrink-0 bg-[#cccedb] ${className}`} />;

const TextTool = ({ icon, label, menu, className = '' }) => (
  <button className={`flex shrink-0 items-center whitespace-nowrap ${className}`}>
    {icon}
    <span className={icon ? 'ml-0.5' : ''}>{label}</span>
    {menu && <Caret className="ml-px text-gray-500" />}
  </button>
);

const ViewToolbar = () => (
  <div className='flex h-[27px] shrink-0 items-center overflow-hidden bg-[#eeeef2] pl-[10px] font-["Open_Sans",sans-serif] text-[13px] text-neutral-900'>
    <Grip />
    <span className="w-1.5" />
    <Tool label="Previous view"><Magnifier><path d="M10.500 6.800h-5M7.500 4.500 5 6.800l2.500 2.400" stroke={GOLD} strokeWidth="1.700" /></Magnifier></Tool>
    <Tool label="Next view"><Magnifier stroke="#aaa"><path d="M5 6.800h5M7.500 4.500l2.500 2.300-2.500 2.400" stroke="#bbb" strokeWidth="1.500" /></Magnifier></Tool>
    <Sep className="mr-0.5 ml-[3px]" />
    <Tool label="Shaded with edges" on><Cube top="#b5b5b5" left="#8c8c8c" right="#6c6c6c" /></Tool>
    <Tool label="Shaded"><Cube top="#bdbdbd" left="#959595" right="#6e6e6e" stroke="none" /></Tool>
    <Tool label="Wireframe">
      <Svg>
        <path d="m7 3 3-2 4 1.500V7l-3 1.500L7 7z" fill="#fff" stroke="#444" />
        <path d="m7 3 4 1.500 3-2M11 4.500v4" stroke="#444" />
        <path d="m1 8 3-2 4 1.500V13l-3 1.500L1 13z" fill={GOLD} stroke="#444" />
        <path d="m1 8 4 1.500 3-2M5 9.500v5" stroke="#444" />
        <path d="M2 4 5 2M11 13l3-2.500" stroke="#444" strokeDasharray="2 1" />
      </Svg>
    </Tool>
    <Sep className="mr-0.5 ml-[3px]" />
    <Tool label="Show mesh">
      <Svg>
        <path d="M1.500 2.500h5v4h-5zM7.500 8.500h7v6h-7zM11 8.500v6M7.500 11.500h7" stroke="#444" />
        <path d="m9 2 4 4M13 3v3h-3" stroke={GOLD} strokeWidth="1.500" />
      </Svg>
    </Tool>
    <Sep className="mr-0.5 ml-[3px]" />
    <Tool label="Rotate">
      <Svg>
        <path d="M2.500 9A5.700 5.700 0 0 1 12 4M13.500 7A5.700 5.700 0 0 1 4 12" stroke="#777" strokeWidth="1.600" />
        <path d="M10 1.500h4v4zM6 14.500H2v-4z" fill={GOLD} />
      </Svg>
    </Tool>
    <Caret className="mx-0.5 text-gray-500" />
    <Tool label="Pan">
      <Svg><path d="m8 0 2.500 3.500h-5zM8 16l2.500-3.500h-5zM0 8l3.500-2.500v5zM16 8l-3.500-2.500v5zM7 7h2v2H7z" fill={GOLD} /><path d="M8 4v1.500M8 10.500V12M4 8h1.500M10.500 8H12" stroke="#444" strokeWidth="1.500" /></Svg>
    </Tool>
    <Tool label="Zoom"><Magnifier><path d="m7.500 3 2.500 3H5zM7.500 10.500 10 7.600H5z" fill={GOLD} /></Magnifier></Tool>
    <Tool label="Box zoom"><Magnifier><path d="M7.500 4v5.600M4.700 6.800h5.600" stroke={GOLD} strokeWidth="2" /></Magnifier></Tool>
    <Tool label="Fit"><Magnifier><path d="m5 5.500 2.500-1.500L10 5.500v3L7.500 10 5 8.500z" fill="#6a9bd8" stroke="#555" /></Magnifier></Tool>
    <Tool label="Zoom to selection"><Magnifier><path d="m5 5.500 2.500-1.500L10 5.500v3L7.500 10 5 8.500z" fill="#ddd" stroke="#555" /><path d="m7.500 7 2.500-1.500v3L7.500 10z" fill="#18b52a" /></Magnifier></Tool>
    <Sep className="ml-0.5" />
    <TextTool label="Select" className="ml-[7px]" />
    <TextTool
      label="Mode"
      menu
      className="ml-[5px]"
      icon={<Svg><path d="M0 1h6v6H0z" fill="#f00" /><path d="m6 4 8 6.500-3.200.3 2 3.700-1.800.8-1.800-3.800L7 14z" fill="#333" /></Svg>}
    />
    <span className="w-[9px]" />
    <Tool label="Smart select" on>
      <Svg>
        <path d="M1.500 8V1.500H6M9.500 8V1.500H15M1.500 16v-6.500H6" stroke="#444" strokeWidth="1.200" />
        <path d="M1 5h5M4.500 2v5M9 5h5M12.500 2v5M1 13h5M4.500 10v5" stroke="#444" />
        <path d="M2 2h3v3H2zM9 1h6v3H9zM2 10h3v3H2z" fill="#1fae2b" />
        <Arrow x={10} y={9} />
      </Svg>
    </Tool>
    <Tool label="Vertex"><BoxPick dot /></Tool>
    <Tool label="Edge"><BoxPick dot top="#baf5bf" /></Tool>
    <Tool label="Face"><BoxPick top="#12e024" /></Tool>
    <Tool label="Body"><BoxPick top="#12e024" front="#12e024" side="#0fbf1e" /></Tool>
    <Tool label="Node"><BoxPick grid="node" dot /></Tool>
    <Tool label="Element face"><BoxPick grid="face" /></Tool>
    <Tool label="Element"><BoxPick grid="body" /></Tool>
    <Tool label="Hit point coordinate">
      <Svg>
        <path d="m1 1 2 3M3 1 1 4M7 1l1 1.500L9 1M8 2.500V4M13 1h2l-2 3h2" stroke="#777" strokeWidth=".8" />
        <path d="m7 6 6 5.500-2.500.2 1.500 3-1 .5-1.500-3L7 14z" fill={GOLD} />
      </Svg>
    </Tool>
    <Tool label="Probe">
      <Svg>
        <path d="M1 1h11l3 2.500L12 6H1z" fill="#fff" stroke="#444" />
        <path d="M3.500 2v3M5.500 2.500h1.500v2H5.500zM9 2.500h1.500v2H9z" stroke="#444" strokeWidth=".8" />
        <path d="m6 7 6 5-2.500.2 1.500 3-1 .5-1.500-3L6 14.500z" fill={GOLD} />
      </Svg>
    </Tool>
    <Tool label="Label">
      <Svg>
        <path d="M1 2.500h11l3 5-3 6H1z" fill="#ccc" stroke="#999" />
        <text x="1.500" y="10.500" fontSize="6.500" fontFamily="Noto Sans, sans-serif" fill="#777">Abc</text>
      </Svg>
    </Tool>
    <Sep className="mx-0.5" />
    <TextTool label="Clipboard" menu className="ml-1" icon={<Svg w={15}><path d="M1 3h14v12.500H1z" fill="#e8b93c" stroke="#444" strokeWidth="1.300" /><path d="M1 1h14v3H1z" fill="#8a6a12" /><path d="M6 0h4v2H6z" fill="#444" /></Svg>} />
    <TextTool label="[ Empty ]" className="ml-3" />
    <Sep className="ml-1.5" />
    <TextTool label="Extend" menu className="ml-1.5" icon={<Cube left="#12e024" />} />
    <TextTool
      label="Select By"
      menu
      className="ml-2.5"
      icon={<Svg><path d="M1 15.500h14M3 12v3M13 12v3" stroke="#444" /><path d="M8 13C5 8 4 7 4 4.500a4 4 0 0 1 8 0C12 7 11 8 8 13z" fill="#e0a91c" /><circle cx="8" cy="4.500" r="1.500" fill="#fff" /></Svg>}
    />
    <TextTool
      label="Convert"
      menu
      className="ml-2.5"
      icon={<Svg><path d="m5 4 3-2.500h7V10l-3 3.500H5z" fill="#12e024" stroke="#333" /><path d="M5 4h7v9M12 4l3-2.500" stroke="#333" /><path d="M0 6.500h4M2.500 4v5" stroke={GOLD} strokeWidth="1.400" /></Svg>}
    />
    <Caret className="mt-2 ml-[10px] text-black" />
  </div>
);

const Model = () => (
  <svg className="absolute top-[248px] left-[232px]" width="494" height="236" aria-label="Plate model" role="img">
    <defs>
      <linearGradient id="bore">
        <stop offset="0" stopColor="#6e6e6e" />
        <stop offset=".8" stopColor="#424242" />
      </linearGradient>
    </defs>
    <path d="M1 1 20 170.500V191L.5 4z" fill="#3f3f3f" stroke="#3f3f3f" />
    <path d="M1.500 1H467L87.500 183A97.500 41.500 0 0 0 20.500 170.500z" fill="#a4a4a4" stroke="#dcdcdc" />
    <path d="M467 1 491 212H118A97.500 41.500 0 0 0 87.500 183z" fill="#889ab0" stroke="#b1cdea" />
    <path d="M20.500 170.500A97.500 41.500 0 0 1 87.500 182.500V203.500A97.500 41.500 0 0 0 20.500 191z" fill="url(#bore)" stroke="#dcdcdc" />
    <path d="M87.500 182.500A97.500 41.500 0 0 1 118.500 212V233A97.500 41.500 0 0 0 87.500 203.500z" fill="#353e46" stroke="#b1cdea" />
    <path d="M118.500 212.500h373v21h-373z" fill="#5d6a77" stroke="#b1cdea" />
  </svg>
);

const Ruler = () => (
  <svg className="absolute bottom-[16px] left-[564px] text-[10px] font-[Inter,sans-serif]" width="540" height="60" aria-label="Scale ruler" role="img">
    <g textAnchor="middle" fill="#000">
      <text x="15" y="14">0.00</text>
      <text x="249" y="14">50.00</text>
      <text x="132" y="53">25.00</text>
      <text x="366" y="53">75.00</text>
      <text x="467" y="14" textAnchor="start">100.00 (mm)</text>
    </g>
    <path d="M16.500 17.500h467v15h-467z" fill="#fff" stroke="#000" />
    <path d="M16 17h117v16H16zM249 17h118v16H249z" fill="#000" />
  </svg>
);

const Triad = () => (
  <svg className="absolute right-0 bottom-[88px] font-[Inter,sans-serif] text-[11px]" width="130" height="130" aria-label="Axis triad" role="img">
    <defs>
      <radialGradient id="ball" cx=".4" cy=".35"><stop offset="0" stopColor="#2ee6e6" /><stop offset="1" stopColor="#008c8c" /></radialGradient>
      <linearGradient id="xAxis" x2="0" y2="1"><stop offset="0" stopColor="#f01010" /><stop offset="1" stopColor="#8c0000" /></linearGradient>
      <linearGradient id="zAxis"><stop offset="0" stopColor="#00008c" /><stop offset=".5" stopColor="#0808e0" /><stop offset="1" stopColor="#000078" /></linearGradient>
    </defs>
    <text x="20" y="17" fill="#1a1aff">Z</text>
    <text x="123" y="110" fill="#f01010">X</text>
    <text x="12" y="63" fontSize="9" fill="#0a9a0a">Y</text>
    <path d="m14 69 11 11-1 3-5 3-4 3q-8-3-9-9z" fill="#005500" />
    <path d="m15 80 4-1 2 26-4 1z" fill="#0a7a0a" />
    <path d="M19 48h5l-1 64h-5z" fill="url(#zAxis)" />
    <path d="m21.500 30 9 19q-9 7-18 0z" fill="url(#zAxis)" />
    <path d="M21 108h67v6H19z" fill="url(#xAxis)" />
    <path d="m88 102 22 9-22 9z" fill="url(#xAxis)" />
    <circle cx="60" cy="54" r="9" fill="url(#ball)" />
  </svg>
);

const NetWidget = () => (
  <div className="absolute right-[126px] bottom-[25px] flex items-center">
    <div className="relative z-10 flex size-[60px] items-center justify-center rounded-full border border-[#444956] bg-[#565b6a] text-white shadow-lg">
      <svg className="absolute inset-0" width="58" height="58" fill="none" aria-hidden="true">
        <defs><linearGradient id="ring" x2="0" y2="1"><stop offset="0" stopColor="#35dbe0" /><stop offset="1" stopColor="#d8e05a" /></linearGradient></defs>
        <path d="M29 4a25 25 0 0 1 5 49.500" stroke="url(#ring)" strokeWidth="1.500" />
      </svg>
      <span className="font-[Lato,sans-serif] text-2xl font-light">47</span>
      <span className="mt-2.5 ml-px text-[10px]">%</span>
    </div>
    <div className="-ml-4 flex h-[42px] w-[75px] flex-col rounded-r-full bg-[#343842] pr-2 pl-[18px] text-[11px] leading-[21px] text-white shadow-lg">
      <div className="flex items-center border-b border-[#282b33]">
        <Svg w={7} h={7} box="0 0 7 7"><path d="M3.500 7V1.500M1 4l2.500-2.700L6 4" stroke="#45b6f5" strokeWidth="1.500" /></Svg>
        <span className="ml-auto leading-5">0.1</span><span className="text-[10px] leading-5 text-gray-400">K/s</span>
      </div>
      <div className="flex items-center">
        <Svg w={7} h={7} box="0 0 7 7"><path d="M3.500 0v5.500M1 3l2.500 2.700L6 3" stroke="#2fb536" strokeWidth="1.500" /></Svg>
        <span className="ml-auto">0</span><span className="text-[10px] text-gray-400">K/s</span>
      </div>
    </div>
  </div>
);

/* ---------- status bar and task bar ---------- */

const StatusBar = () => (
  <footer className='flex h-[21px] shrink-0 items-center bg-[#007acc] pr-[7px] pl-2 font-["Open_Sans",sans-serif] text-[13px] leading-5 text-white'>
    <span>Ready</span>
    <div className="ml-auto flex items-center gap-[15px] whitespace-nowrap">
      <span className="flex items-center gap-0.5">
        <Svg>
          <path d="M1 5h14v7H7l-4 3.500V12H1z" fill="#f5cf45" stroke="#a88416" strokeWidth=".7" />
          <ellipse cx="9.500" cy="5" rx="2.200" ry="4" stroke="#111" strokeWidth="1.300" />
        </Svg>
        No Messages
      </span>
      <span>No Selection</span>
      <span className="flex items-center gap-1.5">
        <Svg w={9} h={5} box="0 0 9 5" className="-mt-1"><path d="M0 5h9L4.500 0z" fill="#fff" /></Svg>
        Metric (mm, kg, N, s, mV, mA)
      </span>
      <span>Degrees</span>
      <span>rad/s</span>
      <span>Celsius</span>
    </div>
  </footer>
);

const taskApps = [
  { name: 'Calculator', icon: <Svg w={24}><path d="M2.500.500h11v15h-11z" fill="#6b7680" /><path d="M4 2h8v3H4z" fill="#59c8f2" /><path d="M4 6.500h2v2H4zM7 6.500h2v2H7zM4 9.500h2v2H4zM7 9.500h2v2H7zM4 12.500h2v2H4zM7 12.500h2v2H7zM10 6.500h2v2h-2z" fill="#d9e0e6" /><path d="M10 9.500h2v5h-2z" fill="#1b5fb0" /></Svg> },
  { name: 'Chrome', icon: <Svg w={24}><circle cx="8" cy="8" r="7.700" fill="#fbc116" /><path d="M1.300 4.200A7.700 7.700 0 0 1 14.700 4.200H8A3.800 3.800 0 0 0 4.700 9.800z" fill="#e33b2e" /><path d="M1.300 4.200A7.700 7.700 0 0 0 7.600 15.700L11.300 10A3.800 3.800 0 0 1 4.700 9.900z" fill="#2da94f" /><circle cx="8" cy="8" r="3.600" fill="#fff" /><circle cx="8" cy="8" r="2.800" fill="#3f7df0" /></Svg> },
  { name: 'ZY', closed: true, icon: <Svg w={24}><path d="M.5 1.500h7v12.500l-3.500-1-3.500 1z" fill="#d13a1c" /><path d="M8 1.500h7.500V14L12 13l-4 1z" fill="#16438a" /><path d="M2 4.500h4L2 11h4.500M9 4.500l2.500 3.500L14 4.500M11.500 8v3.500" stroke="#fff" strokeWidth="1.700" /></Svg> },
  { name: 'Explorer', icon: <Svg w={24}><path d="M1 2h5l1 1.500h8V14H1z" fill="#f2c14a" /><path d="M1 5h14v8H1z" fill="#ffdc79" /><path d="M3 9h10v5.500h-3V12H6v2.500H3z" fill="#3f9ae0" /></Svg> },
  { name: 'UltraEdit', icon: <Svg w={24}><circle cx="8" cy="8" r="7.300" fill="#b98d1f" stroke="#6d5310" /><path d="M4.500 3.500v4q0 2 2 2t2-2v-4M12.500 8H9.500v4.500h3M9.500 10.200h2.500" stroke="#222" strokeWidth="1.500" /></Svg> },
  { name: 'Umbrella', icon: <Svg w={24}><path d="M1.500 6 13.500 1.500 13 11z" fill="#6ccb1e" /><path d="m6 5 7.500-3.500L10.500 9z" fill="#92e53a" /><path d="M8.500 8 7 13.500q-1.500 2-2.500 0" stroke="#6ccb1e" /></Svg> },
  { name: 'Edge', icon: <Svg w={24}><circle cx="8" cy="8" r="7.500" fill="#1378c8" /><path d="M1 7.500C2 1 13.500-1 15.500 6.500 16 10 11 10.500 10 9.500 11.500 6 6 3.500 1 7.500z" fill="#46cfa6" /><path d="M5 9.500C5 13 9 15 13.500 12.500 11 17 3 16 3.500 10 4 7.500 6 6.500 7.500 6.600 5.500 7.200 5 8.200 5 9.500z" fill="#0c4f96" /><path d="M7 8.500q-.500 3.500 4 3.500h3.500l1-2.500q-3 1.500-5.500.2z" fill="#1c1c1c" /></Svg> },
  { name: 'WPS', grouped: true, icon: <Svg w={24}><path d="m.8 3 3.700 10.500L8 5l2.500 8.500L15.200 3h-5M4.500 3h4" stroke="#e8412c" strokeWidth="2" /></Svg> },
  { name: 'Youdao', icon: <Svg w={24}><rect x=".3" y=".3" width="15.400" height="15.400" rx="3" fill="#f0223c" /><text x="8" y="11" textAnchor="middle" fontSize="9" fontWeight="700" fontFamily="Noto Sans, sans-serif" fill="#fff">yd</text></Svg> },
  { name: 'ToDesk', icon: <Svg w={24}><rect x=".3" y=".3" width="15.400" height="15.400" rx="3" fill="#fff" /><path d="M2.500 5H8v3.500H2.500z" fill="#30c0f5" /><path d="M6.500 3.500h7V9L10 12.500H7.500V7H6.500z" fill="#1467f0" /></Svg> },
  { name: 'Monitor', icon: <Svg w={24}><path d="M4 2h11v9l-3 3H5z" fill="#b9bec4" /><path d="M1.500 3.500h10v8h-10z" fill="#eef4fa" stroke="#8b9198" /><path d="M2 8h2l1.500-3L7 10l1.500-3 1 1.500H11" stroke="#2a7ac8" /><path d="m5 12 4 3h2l3-4" fill="#d6d9dc" /></Svg> },
  { name: 'QQ Music', icon: <Svg w={24}><circle cx="8" cy="8" r="7.600" fill="#fbd913" /><circle cx="7" cy="10.500" r="2.600" fill="#19b06a" /><path d="M9 11 6.500 3.500 11 2v2.500L8 5.500" stroke="#19b06a" strokeWidth="1.500" /></Svg> },
  { name: 'Workbench', icon: <Svg w={24}><path d="M0 0h16v16H0z" fill="#000" /><path d="m8 .8 2.200 1.200v2.500L8 5.700 5.800 4.500V2zM5.800 4.500 8 5.700v2.500L5.800 9.500 3.500 8.200V5.700zM10.200 4.500l2.300 1.200v2.500l-2.300 1.300L8 8.200V5.700z" stroke="#e8a317" strokeWidth=".8" /><text x="8" y="15.300" textAnchor="middle" fontSize="6" fontWeight="700" fontFamily="Noto Sans, sans-serif" fill="#fff">WB</text></Svg> },
  { name: 'WeChat', icon: <Svg w={24}><ellipse cx="6.200" cy="6" rx="5.700" ry="4.900" fill="#2dc653" /><path d="m2 9-.5 3L5 10.500z" fill="#2dc653" /><ellipse cx="11.300" cy="10.300" rx="4.300" ry="3.800" fill="#e6e6e6" /><path d="m12 13 2.500 1.700V12z" fill="#e6e6e6" /><path d="M4 4.800h1M7.500 4.800h1M9.500 9.500h.8M12.500 9.500h.8" stroke="#333" /></Svg> },
  { name: 'Mechanical', active: true, icon: <Svg w={24}><path d="M0 0h16v16H0z" fill="#000" /><Gear cx={6} cy={6.800} r={2} /><Gear cx={11} cy={3} r={1.300} /><text x="8" y="15.500" textAnchor="middle" fontSize="6" fontWeight="700" fontFamily="Noto Sans, sans-serif" fill="#fff">M</text></Svg> },
];

const TaskBar = () => (
  <div className="relative flex h-10 shrink-0 items-stretch bg-[#1c1c1c] text-white">
    <button aria-label="Start" className="flex w-[50px] items-center pl-4">
      <Svg><path d="M0 2.300 6.500 1.300v6.200H0zM7.300 1.200 16 0v7.500H7.300zM0 8.400h6.500v6.300L0 13.700zM7.300 8.400H16V16l-8.700-1.200z" fill="#fff" /></Svg>
    </button>
    {taskApps.map((app) => (
      <button key={app.name} aria-label={app.name} className={`flex w-[49px] flex-col items-center ${app.active ? 'bg-[#454545]' : ''}`}>
        <span className="flex h-[38px] items-center">{app.icon}</span>
        <span className={`h-0.5 ${app.active ? 'w-full' : 'w-10'} ${app.closed ? '' : 'bg-[#76b9ed]'} ${app.grouped ? 'border-r-8 border-[#4a7699]' : ''}`} />
      </button>
    ))}
    <div className='ml-auto flex items-center pr-[25px] font-["Noto_Sans","Noto_Sans_CJK_SC",sans-serif]'>
      <Svg w={26} h={26} box="0 0 26 26">
        <circle cx="13" cy="14" r="10" fill="#f59a1b" />
        <path d="M2 9a4 4 0 0 1 4-5 5 5 0 0 1 8 1v6H4z" fill="#a8cdf5" />
        <path d="M12 20a3.500 3.500 0 0 1 4-3 4 4 0 0 1 7 1q3 1 1.500 5H14z" fill="#bcd9fa" />
        <circle cx="19" cy="8" r="6.500" fill="#c42b1c" />
        <path d="m17.500 6.500 2-1.500v6" stroke="#fff" />
      </Svg>
      <span className="ml-[7px] text-sm whitespace-nowrap">17°C&nbsp; 局部晴朗</span>
      <ChevronUp size={18} className="ml-[23px]" />
      <Volume2 size={17} strokeWidth={1.5} className="ml-[6px]" />
      <Svg className="ml-[10px]"><path d="M2 14A12 12 0 0 1 14 2M5 14a9 9 0 0 1 9-9M8 14a6 6 0 0 1 6-6M11 14a3 3 0 0 1 3-3" stroke="#eee" strokeWidth="1.200" /></Svg>
      <span className="ml-2 text-sm">中</span>
      <Svg className="ml-3"><rect width="16" height="16" rx="2" fill="#f04a22" /><path d="M12 4.500Q5 2 4.500 6q0 2 4 2.200 4 .5 3 3-2 2.300-8 .3" stroke="#fff" strokeWidth="2" /></Svg>
      <div className="ml-3 w-[70px] text-center text-[12px] leading-[19px]">
        <div>15:35</div>
        <div>2024/4/19</div>
      </div>
      <Svg w={18} className="ml-[13px]"><path d="M1 2h14v10h-3v3l-3-3H1z" stroke="#fff" /></Svg>
    </div>
    <span className="absolute top-0 right-1 h-full w-px bg-neutral-600" />
    <span className='absolute top-1 right-[15px] font-["Noto_Sans","Noto_Sans_CJK_SC",sans-serif] text-[19px] leading-8 whitespace-nowrap text-white/60'>CSDN @笨鸟不想飞～</span>
  </div>
);

export default function App() {
  return (
    <div className='flex h-screen flex-col overflow-hidden bg-white font-["Noto_Sans",sans-serif]'>
      <TitleBar />
      <Tabs />
      <Ribbon />
      <div className="flex min-h-0 flex-1">
        <aside className="flex w-[288px] shrink-0 flex-col">
          <Outline />
          <Details />
        </aside>
        <div className="w-1 shrink-0 bg-[#eeeef2]" />
        <main className="flex min-w-0 flex-1 flex-col">
          <ViewToolbar />
          <div className="relative flex-1 overflow-hidden bg-white">
            <Model />
            <Ruler />
            <Triad />
            <NetWidget />
          </div>
        </main>
      </div>
      <StatusBar />
      <TaskBar />
    </div>
  );
}
